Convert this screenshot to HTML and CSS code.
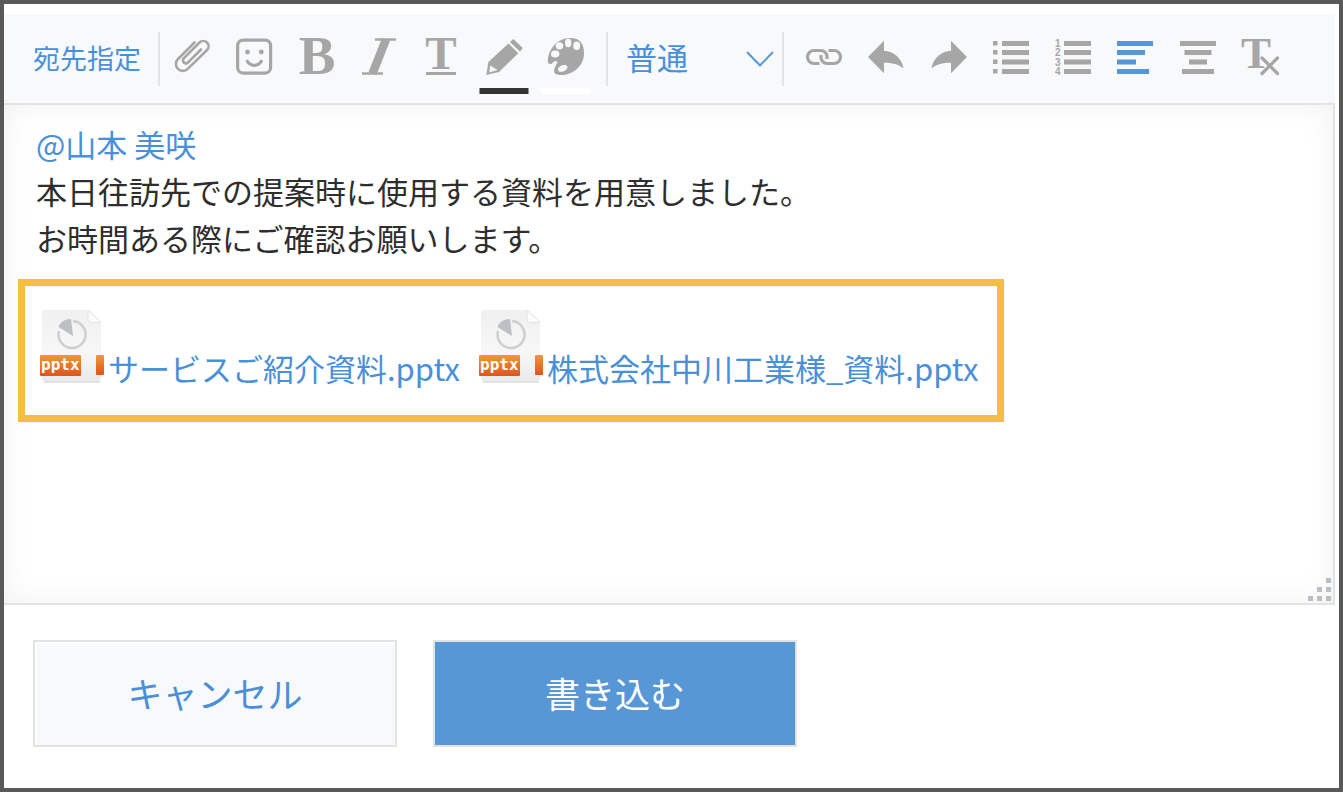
FILE: index.html
```html
<!DOCTYPE html>
<html lang="ja">
<head>
  <meta charset="UTF-8">
  <meta name="viewport" content="width=device-width, initial-scale=1.0">
  <title>書き込み</title>
  <link rel="stylesheet" href="styles.css">
</head>
<body>
  <form class="composer">
    <div class="toolbar" role="toolbar" aria-label="書式">
      <button type="button" class="mention-btn">宛先指定</button>
      <span class="separator"></span>

      <div class="tools tools-format">
        <button type="button" class="tool" aria-label="ファイル添付">
          <svg class="icon line" viewBox="0 0 36 36"><path stroke-width="2.6" stroke-linecap="round" d="M20.5 3.5L4 20A6.9 6.9 0 0 0 13.8 29.9L33 11A5.3 5.3 0 0 0 25.5 3.5L9.5 19.5A3.1 3.1 0 0 0 13.5 24L27 10.5"/></svg>
        </button>
        <button type="button" class="tool" aria-label="絵文字">
          <svg class="icon" viewBox="0 0 36 36"><rect class="line" x="1.6" y="1.1" width="33" height="33" rx="5.5" stroke-width="3.2"/><circle cx="11.5" cy="13" r="2.4"/><circle cx="25.3" cy="13" r="2.4"/><path class="line" stroke-width="3.2" stroke-linecap="round" d="M11.3 22.3c3 5.3 11 5.3 14 0"/></svg>
        </button>
        <button type="button" class="tool" aria-label="太字">
          <svg class="icon" viewBox="0 0 36 36"><text class="serif" x="18" y="35" font-size="55">B</text></svg>
        </button>
        <button type="button" class="tool" aria-label="斜体">
          <svg class="icon line" viewBox="0 0 36 36"><path stroke-width="2.4" d="M14 .5h21M1 34.500h21"/><path stroke-width="8.500" d="M25 .5L11.500 34.500"/></svg>
        </button>
        <button type="button" class="tool" aria-label="下線">
          <svg class="icon" viewBox="0 0 36 36"><text class="serif" x="18" y="30" font-size="47">T</text><rect x="3" y="33" width="30" height="3"/></svg>
        </button>
        <button type="button" class="tool tool-color" aria-label="文字色">
          <svg class="icon" viewBox="0 0 36 36"><path d="M27.3 0L36.8 9 34 12.7 24 3zM22.5 4.5L32.3 14.2 13 33 .3 36 2.4 23zM4.3 26.5L3.3 33.5 11.5 31z" fill-rule="evenodd"/></svg>
          <span class="swatch swatch-text"></span>
        </button>
        <button type="button" class="tool tool-color" aria-label="背景色">
          <svg class="icon" viewBox="0 0 36 36"><path d="M0 24C-1 11 9-1 22-1c10 0 14 6 14 15 0 14-12 22-23 22-7 0-8-3-6-8 1-3 4-5 1-6-3 0-4 4-6 3z"/><g class="holes"><ellipse cx="7.2" cy="15" rx="4.2" ry="3.4"/><ellipse cx="11.5" cy="6.8" rx="3.8" ry="3.6"/><ellipse cx="20.2" cy="4" rx="3.2" ry="4.2"/><ellipse cx="28.7" cy="6.7" rx="3.4" ry="4.2"/><ellipse cx="14.7" cy="29.4" rx="5" ry="3" transform="rotate(-22 14.7 29.4)"/></g></svg>
          <span class="swatch swatch-back"></span>
        </button>
      </div>

      <span class="separator"></span>
      <div class="size-select">
        <select aria-label="文字サイズ">
          <option>普通</option>
          <option>大</option>
          <option>小</option>
        </select>
        <svg class="chevron" viewBox="0 0 28 17"><path d="M1 1.5l13 13.5 13-13.5"/></svg>
      </div>
      <span class="separator"></span>

      <div class="tools tools-block">
        <button type="button" class="tool" aria-label="リンク">
          <svg class="icon line" viewBox="0 0 36 36"><path stroke-width="3.2" d="M13.5 24.5H8a6.5 6.5 0 0 1 0-13h7a6 6 0 0 1 6 6V20M22.5 11.5H28a6.5 6.5 0 0 1 0 13h-7a6 6 0 0 1-6-6V16"/></svg>
        </button>
        <button type="button" class="tool" aria-label="元に戻す">
          <svg class="icon" viewBox="0 0 36 36"><path d="M0 18L16 1.7v10c10 .3 18 8 19.5 17.6C30 25 23 23.5 16 23.7v10.6z"/></svg>
        </button>
        <button type="button" class="tool" aria-label="やり直し">
          <svg class="icon" viewBox="0 0 36 36"><path d="M36 18L20 1.7v10C10 12 2 19.7.5 29.3 6 25 13 23.5 20 23.7v10.6z"/></svg>
        </button>
        <button type="button" class="tool" aria-label="箇条書き">
          <svg class="icon" viewBox="0 0 36 36"><path d="M0 2h4.5v4.5H0zM0 11h4.5v4.5H0zM0 20.5h4.5V25H0zM0 30h4.5v4.5H0zM9 2h27v5H9zM9 11h27v5H9zM9 20.5h27v5H9zM9 30h27v5H9z"/></svg>
        </button>
        <button type="button" class="tool" aria-label="番号付きリスト">
          <svg class="icon" viewBox="0 0 36 36"><path d="M9 2h27v5H9zM9 11h27v5H9zM9 20.5h27v5H9zM9 30h27v5H9z"/><g class="numbers"><text x="0" y="8">1</text><text x="0" y="17">2</text><text x="0" y="27">3</text><text x="0" y="36">4</text></g></svg>
        </button>
        <button type="button" class="tool active" aria-label="左揃え">
          <svg class="icon" viewBox="0 0 36 36"><path d="M0 2h36v5H0zM0 11h28v5H0zM0 20.5h19v5H0zM0 30h32v5H0z"/></svg>
        </button>
        <button type="button" class="tool" aria-label="中央揃え">
          <svg class="icon" viewBox="0 0 36 36"><path d="M0 2h36v5H0zM4.5 11h27v5h-27zM9 20.5h18v5H9zM2 30h32v5H2z"/></svg>
        </button>
        <button type="button" class="tool" aria-label="書式をクリア">
          <svg class="icon" viewBox="0 0 36 36"><text class="serif" x="14" y="29" font-size="45">T</text><path class="line" stroke-width="3.2" stroke-linecap="round" d="M20 19l15.500 15.500M35.500 19L20 34.500"/></svg>
        </button>
      </div>
    </div>

    <div class="editor">
      <div class="message" contenteditable="true" role="textbox" aria-multiline="true" aria-label="本文">
        <p><a href="#">@山本 美咲</a></p>
        <p>本日往訪先での提案時に使用する資料を用意しました。</p>
        <p>お時間ある際にご確認お願いします。</p>
      </div>

      <div class="attachments">
        <a class="attachment" href="#">
          <svg class="file-icon" viewBox="0 0 72 76">
            <defs>
              <linearGradient id="paper" x1="0" y1="0" x2="0" y2="1"><stop offset="0" stop-color="#f0f0f0"/><stop offset=".6" stop-color="#f7f7f7"/><stop offset="1" stop-color="#eaeaea"/></linearGradient>
              <linearGradient id="label" x1="0" y1="0" x2="0" y2="1"><stop offset="0" stop-color="#ee9a30"/><stop offset="1" stop-color="#e0531f"/></linearGradient>
            </defs>
            <g id="pptx">
              <path d="M8 74h56" stroke="#d6d6d6" stroke-width="2" opacity=".7"/>
              <path d="M9 2h43l13 12v56q0 3-3 3H9q-3 0-3-3V5q0-3 3-3z" fill="url(#paper)"/>
              <path d="M52 2l13 12-8 1q-6-1-5-5z" fill="#fcfcfc" stroke="#e2e2e2"/>
              <path d="M37 13a13.500 13.500 0 1 1-14 10" fill="none" stroke="#cfcfcf" stroke-width="2.500"/>
              <path d="M37 28L22.500 19q3-8 12.500-8z" fill="#bcc0c2"/>
              <rect x="4" y="47" width="41" height="21" rx="1" fill="url(#label)"/>
              <rect x="60" y="47" width="8" height="20" rx="1" fill="url(#label)"/>
              <text class="file-ext" x="5" y="62">pptx</text>
            </g>
          </svg>
          <span>サービスご紹介資料.pptx</span>
        </a>
        <a class="attachment" href="#">
          <svg class="file-icon" viewBox="0 0 72 76"><use href="#pptx"/></svg>
          <span>株式会社中川工業様_資料.pptx</span>
        </a>
      </div>

      <svg class="resize-grip" viewBox="0 0 23 23"><path d="M18 0h5v5h-5zM9 9h5v5H9zM18 9h5v5h-5zM0 18h5v5H0zM9 18h5v5H9zM18 18h5v5h-5z"/></svg>
    </div>

    <div class="actions">
      <button type="button" class="btn btn-cancel">キャンセル</button>
      <button type="submit" class="btn btn-submit">書き込む</button>
    </div>
  </form>
</body>
</html>
```

FILE: styles.css
```css
* {
  margin: 0;
  padding: 0;
  box-sizing: border-box;
}

body {
  font-family: 'Noto Sans CJK JP', sans-serif;
  background: #fff;
  color: #2e2e2e;
}

a {
  color: #4a90d9;
  text-decoration: none;
}

button,
select {
  font-family: inherit;
  color: #4a90d9;
  background: none;
  border: none;
  cursor: pointer;
}

.composer {
  min-height: 100vh;
  padding: 10px 4px 40px 0;
  border: 4px solid #595959;
}

/* Toolbar */
.toolbar {
  display: flex;
  align-items: center;
  height: 89px;
  padding-left: 29px;
  background: #f8f9fb;
}

.mention-btn {
  margin-right: 17px;
  padding-bottom: 2px;
  font-size: 27px;
  line-height: 40px;
  white-space: nowrap;
}

.separator {
  flex: none;
  width: 2px;
  height: 54px;
  background: #e2e5e7;
}

.tools {
  flex: none;
  display: grid;
  height: 71px;
}

.tools-format {
  grid-template-columns: repeat(7, 1fr);
  width: 436px;
  margin: 0 9px 0 1px;
}

.tools-block {
  grid-template-columns: repeat(8, 1fr);
  width: 498px;
  margin-left: 9px;
}

.tool {
  position: relative;
  display: flex;
  align-items: center;
  justify-content: center;
  padding-bottom: 3px;
  color: #a6a6a6;
}

.tool.active {
  color: #5797d5;
}

.icon {
  width: 36px;
  height: 36px;
  fill: currentColor;
  overflow: visible;
}

.line {
  fill: none;
  stroke: currentColor;
}

.holes {
  fill: #f8f9fb;
}

.serif {
  font-family: 'Liberation Serif', serif;
  font-weight: bold;
  text-anchor: middle;
}

.numbers {
  font: bold 10px 'Liberation Sans', sans-serif;
}

.swatch {
  position: absolute;
  bottom: 0;
  left: 50%;
  width: 49px;
  height: 6px;
  transform: translateX(-50%);
}

.swatch-text {
  background: #333;
}

.swatch-back {
  background: #fff;
}

.size-select {
  position: relative;
  flex: none;
  width: 174px;
}

.size-select select {
  appearance: none;
  width: 100%;
  padding: 0 0 4px 18px;
  font-size: 31px;
  line-height: 47px;
}

.chevron {
  position: absolute;
  top: 50%;
  right: 8px;
  width: 28px;
  height: 17px;
  transform: translateY(-50%);
  fill: none;
  stroke: #5797d5;
  stroke-width: 2px;
  pointer-events: none;
}

/* Editor */
.editor {
  position: relative;
  min-height: 502px;
  padding: 15px 14px;
  border: 2px solid #e0e4e5;
  border-left: none;
  box-shadow: inset 0 0 30px rgba(0, 0, 0, 0.06);
  font-size: 31px;
  line-height: 47px;
}

.message {
  padding: 0 18px;
  outline: none;
}

.attachments {
  display: flex;
  flex-wrap: wrap;
  gap: 15px;
  width: fit-content;
  margin-top: 18px;
  padding: 22px 19px 31px 11px;
  border: 7px solid #f5be42;
  background: #fff;
}

.attachment {
  display: flex;
  align-items: flex-end;
}

.file-icon {
  flex: none;
  width: 72px;
  height: 76px;
}

.attachment span {
  margin-bottom: -7px;
}

.file-ext {
  font: bold 16px 'DejaVu Sans Mono', monospace;
  fill: #fff;
}

.resize-grip {
  position: absolute;
  right: 2px;
  bottom: 2px;
  width: 23px;
  height: 23px;
  fill: #b9bfc5;
}

/* Buttons */
.actions {
  display: flex;
  flex-wrap: wrap;
  gap: 36px;
  padding: 35px 29px 0;
}

.btn {
  width: 364px;
  height: 107px;
  padding-bottom: 2px;
  border: 2px solid #e0e4e5;
  font-size: 35px;
  line-height: 52px;
}

.btn-cancel {
  background: #f8f9fb;
  box-shadow: inset 2px 2px 0 #fff;
}

.btn-submit {
  background: #5797d5;
  color: #fff;
}
```
